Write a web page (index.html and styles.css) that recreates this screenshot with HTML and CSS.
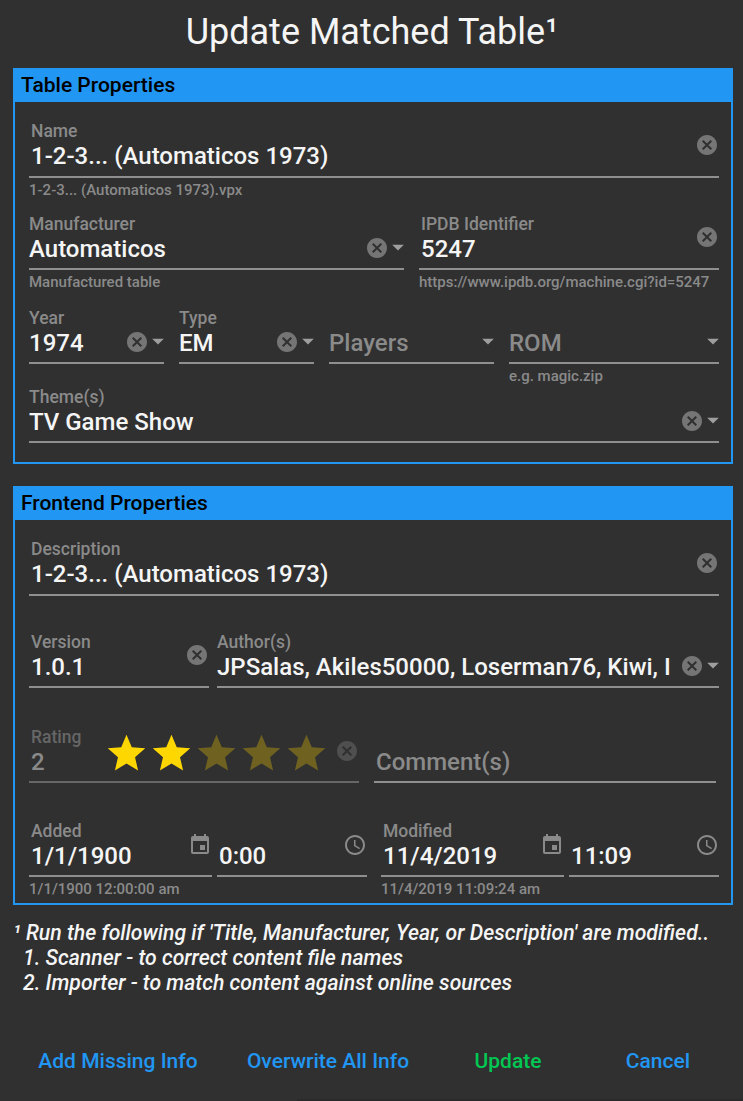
FILE: index.html
```html
<!DOCTYPE html>
<html lang="en">
<head>
    <meta charset="UTF-8">
    <meta name="viewport" content="width=device-width, initial-scale=1.0">
    <title>Update Matched Table</title>
    <link rel="stylesheet" href="styles.css">
</head>
<body>
    <svg class="defs" width="0" height="0">
        <symbol id="clear" viewBox="0 0 24 24"><path d="M12 2C6.47 2 2 6.47 2 12s4.47 10 10 10 10-4.47 10-10S17.53 2 12 2zm5 13.59L15.59 17 12 13.41 8.41 17 7 15.59 10.59 12 7 8.41 8.41 7 12 10.59 15.59 7 17 8.41 13.41 12 17 15.59z"/></symbol>
        <symbol id="arrow" viewBox="0 0 24 24"><path d="M7 10l5 5 5-5z"/></symbol>
        <symbol id="event" viewBox="0 0 24 24"><path d="M17 12h-5v5h5v-5zM16 1v2H8V1H6v2H5c-1.11 0-1.99.9-1.99 2L3 19c0 1.1.89 2 2 2h14c1.1 0 2-.9 2-2V5c0-1.1-.9-2-2-2h-1V1h-2zm3 18H5V8h14v11z"/></symbol>
        <symbol id="clock" viewBox="0 0 24 24"><path d="M11.99 2C6.47 2 2 6.48 2 12s4.47 10 9.99 10C17.52 22 22 17.52 22 12S17.52 2 11.99 2zM12 20c-4.42 0-8-3.58-8-8s3.58-8 8-8 8 3.58 8 8-3.58 8-8 8zm.5-13H11v6l5.25 3.15.75-1.23-4.5-2.67z"/></symbol>
        <symbol id="star" viewBox="0 0 24 24"><path d="M12 17.27L18.18 21l-1.64-7.03L22 9.24l-7.19-.61L12 2 9.19 8.63 2 9.24l5.46 4.73L5.82 21z"/></symbol>
    </svg>

    <h1 class="title">Update Matched Table¹</h1>

    <section class="panel panel-table">
        <h2 class="panel-head">Table Properties</h2>
        <div class="panel-body">
            <div class="row row-name">
                <div class="field grow">
                    <div class="box txt">
                        <div class="text"><label>Name</label><div class="value">1-2-3... (Automaticos 1973)</div></div>
                        <svg class="ico clear high"><use href="#clear"/></svg>
                    </div>
                    <div class="helper">1-2-3... (Automaticos 1973).vpx</div>
                </div>
            </div>
            <div class="row row-maker">
                <div class="field maker">
                    <div class="box">
                        <div class="text"><label>Manufacturer</label><div class="value">Automaticos</div></div>
                        <svg class="ico clear"><use href="#clear"/></svg>
                        <svg class="ico arrow"><use href="#arrow"/></svg>
                    </div>
                    <div class="helper">Manufactured table</div>
                </div>
                <div class="field grow">
                    <div class="box txt">
                        <div class="text"><label>IPDB Identifier</label><div class="value">5247</div></div>
                        <svg class="ico clear high"><use href="#clear"/></svg>
                    </div>
                    <div class="helper url">https://www.ipdb.org/machine.cgi?id=5247</div>
                </div>
            </div>
            <div class="row row-year">
                <div class="field small">
                    <div class="box">
                        <div class="text"><label>Year</label><div class="value">1974</div></div>
                        <svg class="ico clear"><use href="#clear"/></svg>
                        <svg class="ico arrow"><use href="#arrow"/></svg>
                    </div>
                </div>
                <div class="field small">
                    <div class="box">
                        <div class="text"><label>Type</label><div class="value">EM</div></div>
                        <svg class="ico clear"><use href="#clear"/></svg>
                        <svg class="ico arrow"><use href="#arrow"/></svg>
                    </div>
                </div>
                <div class="field mid">
                    <div class="box">
                        <div class="text"><div class="value empty">Players</div></div>
                        <svg class="ico arrow"><use href="#arrow"/></svg>
                    </div>
                </div>
                <div class="field grow">
                    <div class="box">
                        <div class="text"><div class="value empty">ROM</div></div>
                        <svg class="ico arrow"><use href="#arrow"/></svg>
                    </div>
                    <div class="helper hint">e.g. magic.zip</div>
                </div>
            </div>
            <div class="row row-theme">
                <div class="field grow">
                    <div class="box">
                        <div class="text"><label>Theme(s)</label><div class="value">TV Game Show</div></div>
                        <svg class="ico clear"><use href="#clear"/></svg>
                        <svg class="ico arrow"><use href="#arrow"/></svg>
                    </div>
                </div>
            </div>
        </div>
    </section>

    <section class="panel panel-front">
        <h2 class="panel-head">Frontend Properties</h2>
        <div class="panel-body">
            <div class="row row-name">
                <div class="field grow">
                    <div class="box txt">
                        <div class="text"><label>Description</label><div class="value">1-2-3... (Automaticos 1973)</div></div>
                        <svg class="ico clear high"><use href="#clear"/></svg>
                    </div>
                </div>
            </div>
            <div class="row row-version">
                <div class="field version">
                    <div class="box txt">
                        <div class="text"><label>Version</label><div class="value">1.0.1</div></div>
                        <svg class="ico clear high"><use href="#clear"/></svg>
                    </div>
                </div>
                <div class="field grow">
                    <div class="box">
                        <div class="text"><label>Author(s)</label><div class="value">JPSalas, Akiles50000, Loserman76, Kiwi, I</div></div>
                        <svg class="ico clear"><use href="#clear"/></svg>
                        <svg class="ico arrow"><use href="#arrow"/></svg>
                    </div>
                </div>
            </div>
            <div class="row row-rating">
                <div class="field rating">
                    <div class="box txt dim">
                        <div class="text rating-num"><label>Rating</label><div class="value">2</div></div>
                        <div class="stars">
                            <svg class="star on"><use href="#star"/></svg>
                            <svg class="star on"><use href="#star"/></svg>
                            <svg class="star"><use href="#star"/></svg>
                            <svg class="star"><use href="#star"/></svg>
                            <svg class="star"><use href="#star"/></svg>
                        </div>
                        <svg class="ico clear rating-clear"><use href="#clear"/></svg>
                    </div>
                </div>
                <div class="field comment">
                    <div class="box txt">
                        <div class="text"><div class="value empty">Comment(s)</div></div>
                    </div>
                </div>
            </div>
            <div class="row row-dates">
                <div class="field date">
                    <div class="box txt">
                        <div class="text"><label>Added</label><div class="value">1/1/1900</div></div>
                        <svg class="ico pick"><use href="#event"/></svg>
                    </div>
                    <div class="helper">1/1/1900 12:00:00 am</div>
                </div>
                <div class="field time">
                    <div class="box txt">
                        <div class="text"><div class="value">0:00</div></div>
                        <svg class="ico pick"><use href="#clock"/></svg>
                    </div>
                </div>
                <div class="field date modified">
                    <div class="box txt">
                        <div class="text"><label>Modified</label><div class="value">11/4/2019</div></div>
                        <svg class="ico pick"><use href="#event"/></svg>
                    </div>
                    <div class="helper">11/4/2019 11:09:24 am</div>
                </div>
                <div class="field time">
                    <div class="box txt">
                        <div class="text"><div class="value">11:09</div></div>
                        <svg class="ico pick"><use href="#clock"/></svg>
                    </div>
                </div>
            </div>
        </div>
    </section>

    <div class="notes">
        <p>¹ Run the following if 'Title, Manufacturer, Year, or Description' are modified..</p>
        <ol>
            <li>1. Scanner - to correct content file names</li>
            <li>2. Importer - to match content against online sources</li>
        </ol>
    </div>

    <div class="actions">
        <button>Add Missing Info</button>
        <button>Overwrite All Info</button>
        <button class="ok">Update</button>
        <button>Cancel</button>
    </div>
    <div class="edge"></div>
</body>
</html>
```

FILE: styles.css
```css
html, body {
    height: 100%;
}
body {
    margin: 0;
    overflow: hidden;
    background-color: #303030;
    color: #f5f5f5;
    font-family: Roboto, "Liberation Sans", sans-serif;
}
.defs {
    display: block;
    height: 0;
}
.title {
    margin: 0;
    height: 68px;
    padding-left: 1px;
    line-height: 64px;
    font-size: 36px;
    font-weight: 400;
    text-align: center;
}
.panel {
    margin: 0 10px 0 13px;
    border: 2px solid #2196f3;
    border-top: 0;
}
.panel-table {
    height: 394px;
    margin-bottom: 22px;
}
.panel-front {
    height: 417px;
}
.panel-head {
    margin: 0 -2px;
    height: 34px;
    line-height: 34px;
    padding-left: 8px;
    background-color: #2196f3;
    color: #000;
    font-size: 21px;
    font-weight: 500;
}
.panel-body {
    padding: 0 12px 0 14px;
}
.row {
    display: flex;
    gap: 15px;
}
.row-name { padding-top: 18px; height: 110px; box-sizing: border-box; }
.row-maker { height: 94px; }
.row-year { height: 79px; }
.row-version { height: 95px; gap: 8px; }
.row-rating { height: 94px; }
.row-dates { gap: 5px; }

.field { min-width: 0; }
.grow { flex: 1; }
.maker { width: 375px; }
.small { width: 135px; }
.mid { width: 165px; }
.version { width: 180px; }
.rating { width: 330px; }
.comment { width: 342px; }
.date { width: 183px; }
.time { width: 150px; }
.modified { margin-left: 9px; }

.box {
    display: flex;
    height: 56px;
    border-bottom: 2px solid #8f8f8f;
}
.box.dim { border-color: #666; }
.text {
    flex: 1;
    min-width: 0;
    display: flex;
    flex-direction: column;
    justify-content: flex-end;
    padding-bottom: 3px;
}
.row-name .text { padding-bottom: 4px; }
.txt .text { padding-left: 2px; }
label {
    margin-bottom: -1px;
    font-size: 17.5px;
    line-height: 20px;
    font-weight: 500;
    color: #8a8a8a;
}
.value {
    font-size: 24px;
    line-height: 32px;
    font-weight: 500;
    white-space: nowrap;
    overflow: hidden;
}
.value.empty { color: #8a8a8a; }
.dim label { color: #666; }
.dim .value { color: #8a8a8a; }
.helper {
    padding-top: 3px;
    font-size: 15px;
    line-height: 18px;
    font-weight: 500;
    color: #8a8a8a;
    white-space: nowrap;
}

.ico {
    flex: none;
    width: 24px;
    height: 24px;
    fill: #757575;
    align-self: flex-end;
}
.clear { margin-bottom: 8px; }
.clear.high { margin-bottom: 19px; }
.arrow {
    width: 28px;
    height: 28px;
    margin: 0 -8px 7px -5px;
    fill: #9e9e9e;
}
.pick { margin-bottom: 18px; fill: #8a8a8a; }
.rating-num { flex: none; width: 73px; }
.stars {
    display: flex;
    align-self: flex-end;
    margin-bottom: 5px;
}
.star {
    width: 45px;
    height: 45px;
    fill: #ffd700;
    opacity: 0.3;
}
.star.on { opacity: 1; }
.rating-clear { fill: #4f4f4f; margin-left: 6px; margin-bottom: 18px; }

.notes {
    margin: 15px 0 0 13px;
    font-size: 21.2px;
    line-height: 25px;
    font-style: italic;
    font-weight: 500;
}
.notes p, .notes ol {
    margin: 0;
    padding: 0;
    list-style: none;
}
.notes li { padding-left: 10px; }

.actions {
    display: grid;
    grid-template-columns: 210px 210px 150px 150px;
    margin: 48px 0 0 13px;
}
.actions button {
    padding: 0;
    border: 0;
    background: none;
    color: #2196f3;
    font-family: inherit;
    font-size: 21px;
    font-weight: 500;
    line-height: 36px;
}
.actions .ok { color: #00c853; }

/* sliver of the window behind the dialog */
.edge {
    position: fixed;
    left: 297px;
    right: 0;
    bottom: 0;
    height: 2px;
    background-color: #2a2a2a;
}
```
